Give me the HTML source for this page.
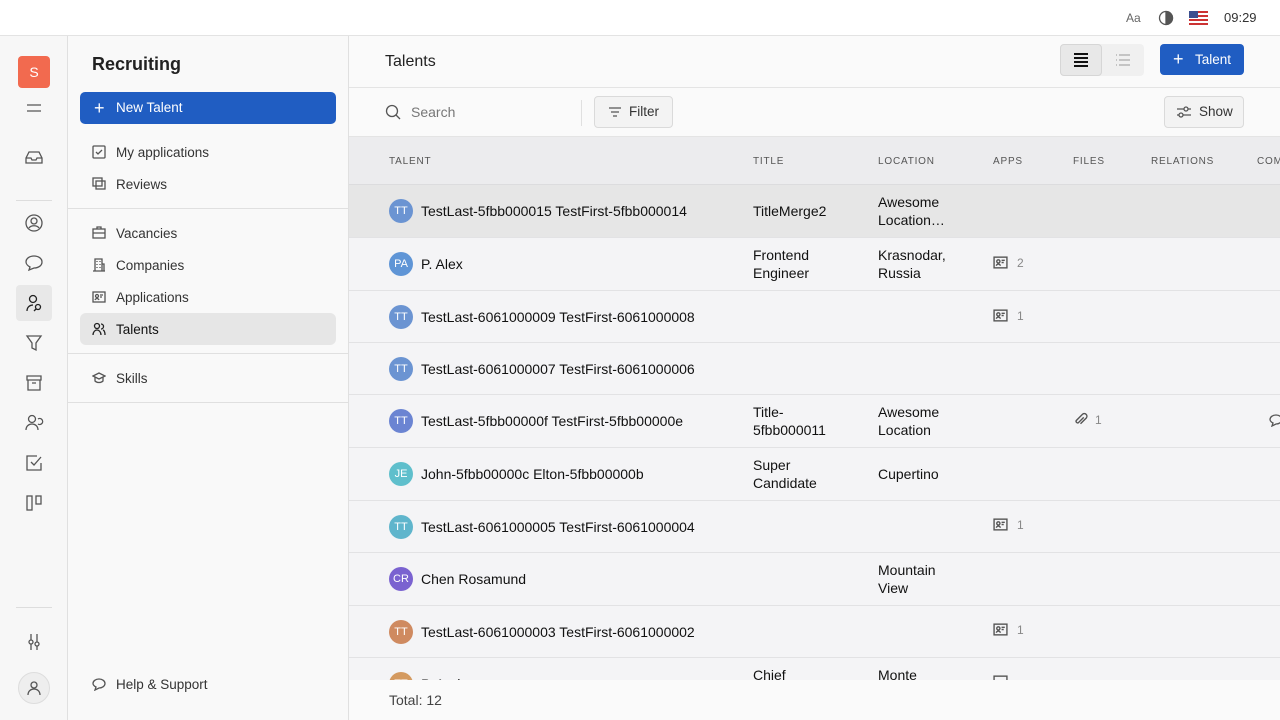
<!DOCTYPE html>
<html><head><meta charset="utf-8"><style>
*{box-sizing:border-box;margin:0;padding:0}
body{width:1280px;height:720px;overflow:hidden;background:#fafafa;font-family:"Liberation Sans",sans-serif;color:#222;position:relative}
.a{position:absolute}
svg{fill:none;stroke:#555;stroke-width:1.3}
.top{left:0;top:0;width:1280px;height:36px;background:#fff;border-bottom:1px solid #e3e3e3}
.rail{left:0;top:36px;width:68px;height:684px;background:#f7f7f7;border-right:1px solid #e0e0e0}
.nav{left:68px;top:36px;width:281px;height:684px;background:#f9f9f9;border-right:1px solid #e0e0e0}
.item{position:absolute;left:12px;width:256px;height:32px;font-size:13.5px;color:#333;display:flex;align-items:center;padding-left:36px;border-radius:6px}
.item svg{position:absolute;left:12px;top:9px}
.ri{position:absolute;left:24px}
.row{position:absolute;left:349px;width:931px;height:53px;border-bottom:1px solid #e2e2e4;background:#f4f4f6;font-size:14px;color:#111}
.row .n{position:absolute;left:72px;top:0;height:52px;line-height:52px;white-space:nowrap}
.av{position:absolute;left:40px;top:14px;width:24px;height:24px;border-radius:50%;color:#fff;font-size:11px;text-align:center;line-height:24px}
.c{position:absolute;font-size:14px;line-height:18px}
.cnt{position:absolute;top:18px;font-size:12px;color:#888}
.hd{font-size:10px;letter-spacing:.8px;color:#555;position:absolute;top:156px}
</style></head><body>
<div class="a top">
 <div class="a" style="left:1126px;top:11px;font-size:12px;color:#666">Aa</div>
 <svg class="a" style="left:1158px;top:10px" width="16" height="16" viewBox="0 0 16 16"><circle cx="8" cy="8" r="6.5"/><path d="M8 1.5a6.5 6.5 0 0 1 0 13z" fill="#555"/></svg>
 <div class="a" style="left:1189px;top:11px;width:19px;height:14px;background:repeating-linear-gradient(#c33 0 2px,#fff 2px 4px)"><div style="width:9px;height:7px;background:#3b4f8f"></div></div>
 <div class="a" style="left:1224px;top:10px;font-size:13px;color:#333">09:29</div>
</div>
<div class="a rail">
 <div class="a" style="left:18px;top:20px;width:32px;height:32px;background:#f26a4f;border-radius:4px;color:#fff;text-align:center;line-height:32px;font-size:14px">S</div>
 <svg class="ri" style="top:62px" width="20" height="20" viewBox="0 0 20 20"><path d="M3 7h14M3 13h14"/></svg>
 <svg class="ri" style="top:112px" width="20" height="20" viewBox="0 0 20 20"><path d="M2 10l3-6h10l3 6v5H2zM2 10h5l1 2h4l1-2h5"/></svg>
 <div class="a" style="left:16px;top:164px;width:36px;height:1px;background:#ddd"></div>
 <svg class="ri" style="top:177px" width="20" height="20" viewBox="0 0 20 20"><circle cx="10" cy="10" r="8"/><circle cx="10" cy="8" r="3"/><path d="M5 15c2-3 8-3 10 0"/></svg>
 <svg class="ri" style="top:217px" width="20" height="20" viewBox="0 0 20 20"><path d="M10 3c4.5 0 8 2.5 8 6s-3.5 6-8 6l-5 2 1-3c-2-1-4-3-4-5 0-3.5 3.5-6 8-6z"/></svg>
 <div class="a" style="left:16px;top:249px;width:36px;height:36px;background:#e8e8e8;border-radius:4px"></div>
 <svg class="ri" style="top:257px;stroke:#222" width="20" height="20" viewBox="0 0 20 20"><circle cx="9" cy="6" r="3.5"/><path d="M3 18c0-4 3-6 6-6"/><circle cx="14" cy="14" r="2.5"/><path d="M12 16l-2 2"/></svg>
 <svg class="ri" style="top:297px" width="20" height="20" viewBox="0 0 20 20"><path d="M3 3h14l-5 7v7l-4-2v-5z"/></svg>
 <svg class="ri" style="top:337px" width="20" height="20" viewBox="0 0 20 20"><path d="M3 3h14v4H3zM4 7v10h12V7M8 10h4"/></svg>
 <svg class="ri" style="top:377px" width="20" height="20" viewBox="0 0 20 20"><circle cx="8" cy="6" r="3.5"/><path d="M2 17c0-4 3-6 6-6s6 2 6 6M14 6a3 3 0 1 1 0 5"/></svg>
 <svg class="ri" style="top:417px" width="20" height="20" viewBox="0 0 20 20"><path d="M17 10v7H3V3h10M7 9l3 3 7-8"/></svg>
 <svg class="ri" style="top:457px" width="20" height="20" viewBox="0 0 20 20"><rect x="3" y="3" width="5" height="14"/><rect x="12" y="3" width="5" height="8"/></svg>
 <div class="a" style="left:16px;top:571px;width:36px;height:1px;background:#ddd"></div>
 <svg class="ri" style="top:596px" width="20" height="20" viewBox="0 0 20 20"><path d="M7 2v6M7 12v6M13 2v8M13 14v4"/><circle cx="7" cy="10" r="2"/><circle cx="13" cy="12" r="2"/></svg>
 <div class="a" style="left:18px;top:636px;width:32px;height:32px;border-radius:50%;background:#eee;border:1px solid #ddd"></div>
 <svg class="ri" style="top:642px" width="20" height="20" viewBox="0 0 20 20"><circle cx="10" cy="7" r="3"/><path d="M4 17c0-4 3-6 6-6s6 2 6 6"/></svg>
</div>
<div class="a nav">
 <div class="a" style="left:24px;top:18px;font-size:18px;font-weight:bold;color:#222">Recruiting</div>
 <div class="a" style="left:12px;top:56px;width:256px;height:32px;background:#205dc2;border-radius:5px;color:#fff;font-size:13.5px;line-height:32px;padding-left:36px">New Talent<span class="a" style="left:14px;top:0;font-size:18px">+</span></div>
 <div class="item" style="top:100px"><svg width="14" height="14" viewBox="0 0 14 14"><rect x="1" y="1" width="12" height="12" rx="1"/><path d="M4 7l2 2 4-4"/></svg>My applications</div>
 <div class="item" style="top:132px"><svg width="14" height="14" viewBox="0 0 14 14"><rect x="1" y="1" width="9" height="8"/><rect x="4" y="4" width="9" height="8"/></svg>Reviews</div>
 <div class="a" style="left:0;top:172px;width:281px;height:1px;background:#e0e0e0"></div>
 <div class="item" style="top:181px"><svg width="14" height="14" viewBox="0 0 14 14"><rect x="1" y="3" width="12" height="9"/><path d="M5 3V1h4v2M1 7h12"/></svg>Vacancies</div>
 <div class="item" style="top:213px"><svg width="14" height="14" viewBox="0 0 14 14"><path d="M3 13V1h7v12M1 13h12M10 6h2v7M5 3v1M8 3v1M5 6v1M8 6v1M5 9v1M8 9v1"/></svg>Companies</div>
 <div class="item" style="top:245px"><svg width="14" height="14" viewBox="0 0 14 14"><rect x="1" y="2" width="12" height="10"/><circle cx="5" cy="6" r="1.5"/><path d="M3 10c1-2 3-2 4 0M8 5h3M8 7h2"/></svg>Applications</div>
 <div class="item" style="top:277px;background:#e6e6e6;color:#111"><svg width="14" height="14" viewBox="0 0 14 14" style="stroke:#222"><circle cx="5" cy="4" r="2.5"/><path d="M1 13c0-3 2-5 4-5s4 2 4 5M9 2a2.5 2.5 0 0 1 0 5M11 8c1.5.5 2 2.5 2 5"/></svg>Talents</div>
 <div class="a" style="left:0;top:317px;width:281px;height:1px;background:#e0e0e0"></div>
 <div class="item" style="top:326px"><svg width="14" height="14" viewBox="0 0 14 14"><path d="M1 5l6-3 6 3-6 3zM3 6v4c2 2 6 2 8 0V6"/></svg>Skills</div>
 <div class="a" style="left:0;top:366px;width:281px;height:1px;background:#e0e0e0"></div>
 <div class="item" style="top:632px"><svg width="14" height="14" viewBox="0 0 14 14"><path d="M7 2c3.3 0 6 2 6 4.5S10.3 11 7 11l-4 2 1-3C2 9 1 8 1 6.5 1 4 3.7 2 7 2z"/></svg>Help &amp; Support</div>
</div>
<div class="a" style="left:349px;top:36px;width:931px;height:52px;border-bottom:1px solid #e4e4e4;background:#fafafa">
 <div class="a" style="left:36px;top:17px;font-size:16px;color:#222">Talents</div>
 <div class="a" style="left:711px;top:8px;width:84px;height:32px;background:#f0f0f0;border-radius:4px"></div>
 <div class="a" style="left:711px;top:8px;width:42px;height:32px;background:#e8e8e8;border:1px solid #d6d6d6;border-radius:4px"></div>
 <svg class="a" style="left:724px;top:16px;stroke:#111;stroke-width:2" width="16" height="16" viewBox="0 0 16 16"><path d="M1 2h14M1 6h14M1 10h14M1 14h14"/></svg>
 <svg class="a" style="left:766px;top:16px;stroke:#aaa" width="16" height="16" viewBox="0 0 16 16"><path d="M1 3h1M4 3h11M1 8h1M4 8h11M1 13h1M4 13h11"/></svg>
 <div class="a" style="left:811px;top:8px;width:84px;height:31px;background:#205dc2;border-radius:4px;color:#fff;font-size:13.5px;line-height:31px;padding-left:35px">Talent<span class="a" style="left:13px;top:0;font-size:18px">+</span></div>
</div>
<div class="a" style="left:349px;top:88px;width:931px;height:49px;background:#fafafa;border-bottom:1px solid #e4e4e4">
 <svg class="a" style="left:36px;top:16px" width="16" height="16" viewBox="0 0 16 16"><circle cx="7" cy="7" r="5.5"/><path d="M11 11l4 4"/></svg>
 <div class="a" style="left:62px;top:16px;font-size:14px;color:#777">Search</div>
 <div class="a" style="left:232px;top:12px;width:1px;height:26px;background:#e0e0e0"></div>
 <div class="a" style="left:245px;top:8px;width:79px;height:32px;border:1px solid #dadada;border-radius:4px;background:#f3f3f3;font-size:13.5px;line-height:30px;padding-left:34px;color:#333">Filter</div>
 <svg class="a" style="left:258px;top:16px" width="16" height="16" viewBox="0 0 16 16"><path d="M2 4h12M4 8h8M6 12h4"/></svg>
 <div class="a" style="left:815px;top:8px;width:80px;height:32px;border:1px solid #dadada;border-radius:4px;background:#f3f3f3;font-size:13.5px;line-height:30px;padding-left:34px;color:#333">Show</div>
 <svg class="a" style="left:827px;top:16px" width="16" height="16" viewBox="0 0 16 16"><path d="M1 5h14M1 11h14"/><circle cx="10" cy="5" r="2" fill="#f3f3f3"/><circle cx="5" cy="11" r="2" fill="#f3f3f3"/></svg>
</div>
<div class="a" style="left:349px;top:137px;width:931px;height:48px;background:#ececee;border-bottom:1px solid #dcdcde"></div>
<div class="hd" style="left:389px">TALENT</div><div class="hd" style="left:753px">TITLE</div><div class="hd" style="left:878px">LOCATION</div><div class="hd" style="left:993px">APPS</div><div class="hd" style="left:1073px">FILES</div><div class="hd" style="left:1151px">RELATIONS</div><div class="hd" style="left:1257px">COM</div>

<div class="row" style="top:185px;background:#e6e6e6"><div class="av" style="background:#6b94d2">TT</div><div class="n">TestLast-5fbb000015 TestFirst-5fbb000014</div><div class="c" style="left:404px;top:17px">TitleMerge2</div><div class="c" style="left:529px;top:8px">Awesome<br>Location…</div></div>
<div class="row" style="top:238px"><div class="av" style="background:#5f95d6">PA</div><div class="n">P. Alex</div><div class="c" style="left:404px;top:8px">Frontend<br>Engineer</div><div class="c" style="left:529px;top:8px">Krasnodar,<br>Russia</div>
 <svg class="a" style="left:644px;top:17px" width="15" height="15" viewBox="0 0 14 14"><rect x="1" y="2" width="12" height="10"/><circle cx="5" cy="6" r="1.5"/><path d="M3 10c1-2 3-2 4 0M8 5h3M8 7h2"/></svg><div class="cnt" style="left:668px">2</div></div>
<div class="row" style="top:291px;height:52px"><div class="av" style="background:#6b94d2">TT</div><div class="n">TestLast-6061000009 TestFirst-6061000008</div>
 <svg class="a" style="left:644px;top:17px" width="15" height="15" viewBox="0 0 14 14"><rect x="1" y="2" width="12" height="10"/><circle cx="5" cy="6" r="1.5"/><path d="M3 10c1-2 3-2 4 0M8 5h3M8 7h2"/></svg><div class="cnt" style="left:668px">1</div></div>
<div class="row" style="top:343px;height:52px"><div class="av" style="background:#6b94d2">TT</div><div class="n">TestLast-6061000007 TestFirst-6061000006</div></div>
<div class="row" style="top:395px"><div class="av" style="background:#6b84d2">TT</div><div class="n">TestLast-5fbb00000f TestFirst-5fbb00000e</div><div class="c" style="left:404px;top:8px">Title-<br>5fbb000011</div><div class="c" style="left:529px;top:8px">Awesome<br>Location</div>
 <svg class="a" style="left:724px;top:17px" width="15" height="15" viewBox="0 0 14 14"><path d="M10 5l-5 5a1.5 1.5 0 0 1-2-2l6-6a2.5 2.5 0 0 1 3.5 3.5L7 11"/></svg><div class="cnt" style="left:746px">1</div>
 <svg class="a" style="left:920px;top:18px" width="14" height="14" viewBox="0 0 14 14"><path d="M7 2c3.3 0 6 2 6 4.5S10.3 11 7 11l-4 2 1-3C2 9 1 8 1 6.5 1 4 3.7 2 7 2z"/></svg></div>
<div class="row" style="top:448px"><div class="av" style="background:#5fbfcc">JE</div><div class="n">John-5fbb00000c Elton-5fbb00000b</div><div class="c" style="left:404px;top:8px">Super<br>Candidate</div><div class="c" style="left:529px;top:17px">Cupertino</div></div>
<div class="row" style="top:501px;height:52px"><div class="av" style="background:#5fb5cc">TT</div><div class="n">TestLast-6061000005 TestFirst-6061000004</div>
 <svg class="a" style="left:644px;top:16px" width="15" height="15" viewBox="0 0 14 14"><rect x="1" y="2" width="12" height="10"/><circle cx="5" cy="6" r="1.5"/><path d="M3 10c1-2 3-2 4 0M8 5h3M8 7h2"/></svg><div class="cnt" style="left:668px;top:17px">1</div></div>
<div class="row" style="top:553px"><div class="av" style="background:#7a62d0">CR</div><div class="n">Chen Rosamund</div><div class="c" style="left:529px;top:8px">Mountain<br>View</div></div>
<div class="row" style="top:606px;height:52px"><div class="av" style="background:#cf8a60">TT</div><div class="n">TestLast-6061000003 TestFirst-6061000002</div>
 <svg class="a" style="left:644px;top:16px" width="15" height="15" viewBox="0 0 14 14"><rect x="1" y="2" width="12" height="10"/><circle cx="5" cy="6" r="1.5"/><path d="M3 10c1-2 3-2 4 0M8 5h3M8 7h2"/></svg><div class="cnt" style="left:668px;top:17px">1</div></div>
<div class="row" style="top:658px"><div class="av" style="background:#d49a60">TT</div><div class="n">P. Anderson</div><div class="c" style="left:404px;top:8px">Chief<br>Officer</div><div class="c" style="left:529px;top:8px">Monte<br>Carlo</div>
 <svg class="a" style="left:644px;top:16px" width="15" height="15" viewBox="0 0 14 14"><rect x="1" y="2" width="12" height="10"/></svg></div>
<div class="a" style="left:349px;top:680px;width:931px;height:40px;background:#fafafa;font-size:14px;color:#444;padding:12px 0 0 40px">Total: 12</div>
</body></html>
